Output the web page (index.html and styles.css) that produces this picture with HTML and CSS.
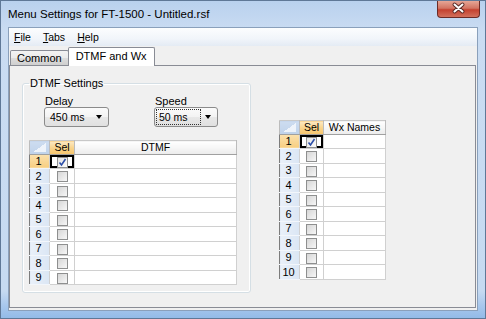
FILE: index.html
```html
<!DOCTYPE html>
<html lang="en">
<head>
  <meta charset="UTF-8" />
  <title>Menu Settings for FT-1500</title>
  <link rel="stylesheet" href="styles.css">
</head>
<body>

  <div class="window">
    <div class="titlebar">
      <span class="title">Menu Settings for FT-1500 - Untitled.rsf</span>
      <div class="close">
        <svg width="43" height="17" viewBox="0 0 43 17">
          <path d="M17.5 4.5 L25.5 11.5 M25.5 4.5 L17.5 11.5" stroke="#5a2a26" stroke-width="4" stroke-linecap="round" />
          <path d="M17.5 4.5 L25.5 11.5 M25.5 4.5 L17.5 11.5" stroke="#fff" stroke-width="2" stroke-linecap="round" />
        </svg>
      </div>
    </div>

    <div class="client">
      <div class="menubar">
        <span class="menu"><u>F</u>ile</span>
        <span class="menu"><u>T</u>abs</span>
        <span class="menu"><u>H</u>elp</span>
      </div>

      <div class="tabs">
        <div class="tabstrip">
          <div class="tab">Common</div>
          <div class="tab selected">DTMF and Wx</div>
        </div>

        <div class="page">
          <fieldset class="group">
            <legend>DTMF Settings</legend>
            <div class="fields">
              <div class="field delay">
                <label>Delay</label>
                <div class="combo"><span class="value">450 ms</span><span class="arrow"></span></div>
              </div>
              <div class="field speed">
                <label>Speed</label>
                <div class="combo focused"><span class="value">50 ms</span><span class="arrow"></span></div>
              </div>
            </div>

            <table class="grid dtmf">
              <colgroup><col class="c-rh"><col class="c-sel"><col></colgroup>
              <tr class="head"><th class="corner"></th><th class="active">Sel</th><th>DTMF</th></tr>
              <tr><td class="rh active">1</td><td class="sel current"><span class="check on"><svg width="9" height="9" viewBox="0 0 9 9"><path d="M1.5 4.5 L3.5 7 L7.5 1" fill="none" stroke="#2b4ea8" stroke-width="1.6" /></svg></span></td><td></td></tr>
              <tr><td class="rh">2</td><td class="sel"><span class="check"></span></td><td></td></tr>
              <tr><td class="rh">3</td><td class="sel"><span class="check"></span></td><td></td></tr>
              <tr><td class="rh">4</td><td class="sel"><span class="check"></span></td><td></td></tr>
              <tr><td class="rh">5</td><td class="sel"><span class="check"></span></td><td></td></tr>
              <tr><td class="rh">6</td><td class="sel"><span class="check"></span></td><td></td></tr>
              <tr><td class="rh">7</td><td class="sel"><span class="check"></span></td><td></td></tr>
              <tr><td class="rh">8</td><td class="sel"><span class="check"></span></td><td></td></tr>
              <tr><td class="rh">9</td><td class="sel"><span class="check"></span></td><td></td></tr>
            </table>
          </fieldset>

          <table class="grid wx">
            <colgroup><col class="c-rh"><col class="c-sel"><col></colgroup>
            <tr class="head"><th class="corner"></th><th class="active">Sel</th><th>Wx Names</th></tr>
            <tr><td class="rh active">1</td><td class="sel current"><span class="check on"><svg width="9" height="9" viewBox="0 0 9 9"><path d="M1.5 4.5 L3.5 7 L7.5 1" fill="none" stroke="#2b4ea8" stroke-width="1.6" /></svg></span></td><td></td></tr>
            <tr><td class="rh">2</td><td class="sel"><span class="check"></span></td><td></td></tr>
            <tr><td class="rh">3</td><td class="sel"><span class="check"></span></td><td></td></tr>
            <tr><td class="rh">4</td><td class="sel"><span class="check"></span></td><td></td></tr>
            <tr><td class="rh">5</td><td class="sel"><span class="check"></span></td><td></td></tr>
            <tr><td class="rh">6</td><td class="sel"><span class="check"></span></td><td></td></tr>
            <tr><td class="rh">7</td><td class="sel"><span class="check"></span></td><td></td></tr>
            <tr><td class="rh">8</td><td class="sel"><span class="check"></span></td><td></td></tr>
            <tr><td class="rh">9</td><td class="sel"><span class="check"></span></td><td></td></tr>
            <tr><td class="rh">10</td><td class="sel"><span class="check"></span></td><td></td></tr>
          </table>
        </div>
      </div>
    </div>
  </div>

</body>
</html>
```

FILE: styles.css
```css
* {
  box-sizing: border-box;
}
body {
  margin: 0;
  font-family: "Liberation Sans", Arial, sans-serif;
  font-size: 10.5px;
  color: #000;
}
.window {
  width: 486px;
  height: 319px;
  display: flex;
  flex-direction: column;
  padding: 0 7px 7px;
  border: 1px solid #5f7897;
  background: linear-gradient(#b9d1ee, #cadcf2 30px, #c6daf1 290px, #a9c8ed 304px, #93bbe8);
}
.titlebar {
  height: 26px;
  display: flex;
  align-items: flex-start;
  flex-shrink: 0;
}
.title {
  font-size: 11.5px;
  padding-top: 7px;
}
.close {
  margin-left: auto;
  margin-right: -2px;
  width: 43px;
  height: 17px;
  border: 1px solid #6b2b26;
  border-top: none;
  border-radius: 0 0 4px 4px;
  background: linear-gradient(#e6a696, #d27462 45%, #c4412f 55%, #d2705c);
}
.close svg {
  display: block;
  margin: -1px 0 0 -1px;
}
.client {
  flex: 1;
  display: flex;
  flex-direction: column;
  border: 1px solid #8aa0bb;
  background: #f0f0f0;
}
.menubar {
  height: 18px;
  display: flex;
  align-items: center;
  padding-left: 5px;
  gap: 12px;
  background: linear-gradient(#fcfdfe, #f1f5fa 60%, #e4ebf4);
  font-size: 10.5px;
}
.menu u {
  text-decoration-thickness: 1px;
  text-underline-offset: 1px;
}
.tabs {
  flex: 1;
  display: flex;
  flex-direction: column;
  padding: 0 1px 2px 0;
}
.tabstrip {
  height: 19px;
  display: flex;
  align-items: flex-start;
  padding-left: 1px;
  flex-shrink: 0;
}
.tab {
  margin-top: 4px;
  height: 15px;
  line-height: 14px;
  padding: 0 6px;
  border: 1px solid #898c95;
  border-bottom: none;
  border-radius: 2px 2px 0 0;
  background: linear-gradient(#f3f3f3, #ebebeb 50%, #dddddd 50%, #cfcfcf);
  font-size: 11px;
}
.tab.selected {
  position: relative;
  z-index: 1;
  margin-top: 1px;
  margin-left: -1px;
  height: 19px;
  margin-bottom: -1px;
  line-height: 16px;
  padding: 0 7px;
  background: #fff;
}
.page {
  flex: 1;
  display: flex;
  align-items: flex-start;
  padding-left: 12px;
  border: 1px solid #898c95;
  background: #f0f0f0;
}
.group {
  margin: 11px 0 0;
  width: 228px;
  padding: 0 13px 7px 6px;
  border: 1px solid #d5dfe5;
  border-radius: 3px;
  box-shadow: inset 0 0 0 1px #fff;
}
.group legend {
  padding: 0 1px;
  line-height: 12px;
  font-size: 11px;
}
.fields {
  display: flex;
  gap: 45px;
  margin-left: 15px;
}
.field label {
  display: block;
  padding-left: 1px;
  margin-top: 6px;
  line-height: 12px;
  font-size: 11px;
}
.combo {
  height: 20px;
  display: flex;
  align-items: center;
  justify-content: space-between;
  padding: 0 6px 0 5px;
  border: 1px solid #8b8b8b;
  border-radius: 3px;
  background: linear-gradient(#fbfbfb, #f3f3f3 50%, #e8e8e8 50%, #e0e0e0);
}
.delay .combo {
  width: 65px;
}
.speed .combo {
  width: 64px;
  padding-left: 1px;
}
.combo.focused .value {
  width: 45px;
  height: 16px;
  line-height: 14px;
  padding-left: 2px;
  border: 1px dotted #333;
}
.arrow {
  border-top: 4px solid #000;
  border-left: 3.5px solid transparent;
  border-right: 3.5px solid transparent;
}
.grid {
  border-collapse: collapse;
  table-layout: fixed;
  border: 1px solid #7c7c7c;
  background: #fff;
}
.grid.dtmf {
  width: 208px;
  margin-top: 13px;
}
.grid.wx {
  width: 107px;
  margin: 54px 0 0 28px;
}
.grid col.c-rh {
  width: 20px;
}
.grid col.c-sel {
  width: 25px;
}
.grid.wx col.c-sel {
  width: 24px;
}
.grid tr {
  height: 14.5px;
}
.grid tr.head {
  height: 13.5px;
}
.grid th,
.grid td {
  padding: 0;
  border: 1px solid #d0d0d0;
  font-weight: normal;
  line-height: 12px;
}
.grid th {
  border-color: #c8c8c8 #bcbcbc #a0a0a0;
  background: linear-gradient(#ffffff, #f6f6f6 50%, #ebebeb);
  text-align: center;
}
.grid th.active {
  background: linear-gradient(#fde9c4, #f9d48c 50%, #f6c56c);
}
.grid th.corner {
  background: linear-gradient(to top left, #eef3fa 50%, transparent 50%) right 3px bottom 2px / 13px 9px no-repeat,
    linear-gradient(#cddcf0, #bfd2ea);
}
.grid td.rh {
  text-align: center;
  padding-right: 2px;
  border-color: #f2f6fb #d0d0d0 #f2f6fb #7c7c7c;
  background: linear-gradient(to right, #e9f0f9, #dbe6f4);
  font-size: 11px;
}
.grid td.rh.active {
  background: linear-gradient(#fbe1ae, #f8cf82);
}
.grid td.sel {
  text-align: center;
}
.grid td.current {
  box-shadow: inset 0 0 0 2px #000;
}
.check {
  display: inline-block;
  vertical-align: middle;
  width: 11px;
  height: 11px;
  border: 1px solid #8e8f8f;
  background: linear-gradient(135deg, #d6d6d6, #f7f7f7);
}
.check.on {
  background: linear-gradient(135deg, #e4e4e4, #fbfbfb);
}
.check svg {
  display: block;
}
```
